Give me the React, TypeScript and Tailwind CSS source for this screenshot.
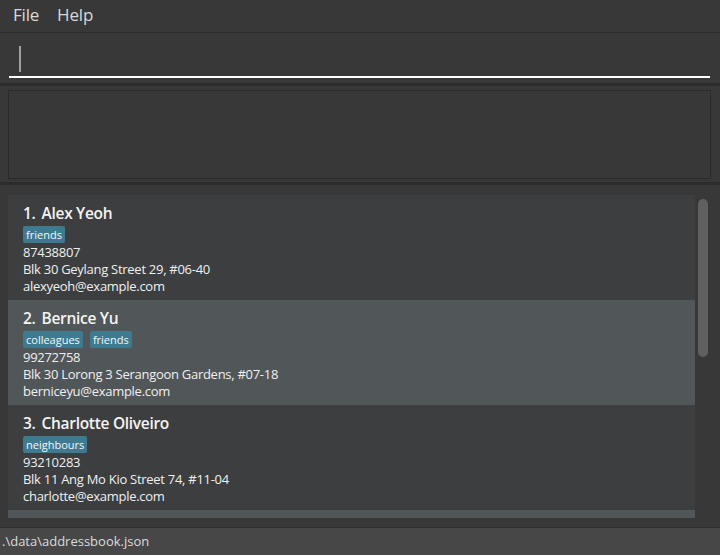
import React from "react";

type Person = { name: string; tags: string[]; phone: string; address: string; email: string };

const people: Person[] = [
  { name: "Alex Yeoh", tags: ["friends"], phone: "87438807", address: "Blk 30 Geylang Street 29, #06-40", email: "alexyeoh@example.com" },
  { name: "Bernice Yu", tags: ["colleagues", "friends"], phone: "99272758", address: "Blk 30 Lorong 3 Serangoon Gardens, #07-18", email: "berniceyu@example.com" },
  { name: "Charlotte Oliveiro", tags: ["neighbours"], phone: "93210283", address: "Blk 11 Ang Mo Kio Street 74, #11-04", email: "charlotte@example.com" },
];

function Card({ p, i }: { p: Person; i: number }) {
  const bg = i % 2 === 0 ? "bg-[#3c3e3f]" : "bg-[#515658]";
  return (
    <div className={`${bg} h-[105px] shrink-0 pl-[15px] pt-[8px] flex flex-col`}>
      <div className="text-[15.5px] leading-[21px] font-semibold text-[#f4f4f4] tracking-[-0.3px]">
        {i + 1}.<span className="ml-[6px]">{p.name}</span>
      </div>
      <div className="flex gap-[7px] mt-[2px] h-[17px]">
        {p.tags.map((t) => (
          <span key={t} className="bg-[#3e7b91] text-[#f2f8fa] text-[11px] leading-[17px] px-[3px] rounded-[2px]">
            {t}
          </span>
        ))}
      </div>
      <div className="mt-[1px] flex flex-col text-[13px] leading-[17px] text-[#f0f0f0] tracking-[-0.28px]">
        <div>{p.phone}</div>
        <div>{p.address}</div>
        <div>{p.email}</div>
      </div>
    </div>
  );
}

export default function App() {
  return (
    <div
      className="w-[720px] h-[555px] bg-[#383838] flex flex-col overflow-hidden"
      style={{ fontFamily: '"Open Sans", "Noto Sans", sans-serif' }}
    >
      {/* menu bar */}
      <div className="h-[33px] shrink-0 border-b border-[#2b2b2b] flex items-center pl-[13px] pb-[2px] gap-[18px] text-[17px] text-[#d8d8d8] tracking-[-0.2px]">
        <span>File</span>
        <span>Help</span>
      </div>
      {/* command box */}
      <div className="h-[50px] shrink-0 pl-[9px] pr-[10px] pt-[5px]">
        <div className="h-[40px] border-b-2 border-white flex items-center pl-[10px] pt-[4px]">
          <div className="w-[2px] h-[26px] bg-[#a0a0a0]" />
        </div>
      </div>
      <div className="h-[3px] shrink-0 bg-[#2c2c2c]" />
      {/* result display */}
      <div className="h-[96px] shrink-0 pt-[4px] pb-[3px] pl-[8px] pr-[9px]">
        <div className="h-full border border-[#2a2a2a] bg-[#383838]" />
      </div>
      <div className="h-[3px] shrink-0 bg-[#2c2c2c]" />
      {/* list */}
      <div className="h-[342px] shrink-0 pt-[10px] pb-[9px] pl-[8px] flex">
        <div className="w-[687px] h-full overflow-hidden flex flex-col">
          {people.map((p, i) => (
            <Card key={p.name} p={p} i={i} />
          ))}
          <div className="h-[8px] shrink-0 bg-[#515658]" />
        </div>
        <div className="w-[15px] h-full pl-[3px] pt-[4px]">
          <div className="w-[10px] h-[158px] bg-[#606060] rounded-[5px]" />
        </div>
      </div>
      {/* status bar */}
      <div className="flex-1 border-t border-[#2e2e2e] bg-[#474747] flex items-center pl-[2px] text-[13px] text-[#dcdcdc]">
        .\data\addressbook.json
      </div>
    </div>
  );
}
